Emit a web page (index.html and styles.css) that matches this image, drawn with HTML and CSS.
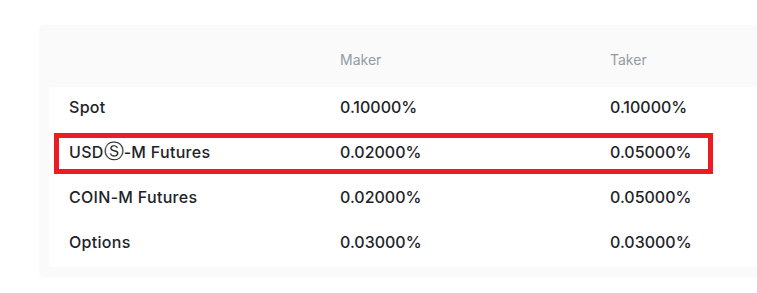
FILE: index.html
```html
<!DOCTYPE html>
<html lang="en">
<head>
<meta charset="utf-8">
<title>Trading fees</title>
<link rel="stylesheet" href="styles.css">
</head>
<body>
<div class="panel">
  <div class="row head">
    <div class="cell"></div>
    <div class="cell">Maker</div>
    <div class="cell">Taker</div>
  </div>
  <div class="body">
    <div class="row">
      <div class="cell">Spot</div>
      <div class="cell">0.10000%</div>
      <div class="cell">0.10000%</div>
    </div>
    <div class="row">
      <div class="cell">USD<span class="circ">Ⓢ</span>-M Futures</div>
      <div class="cell">0.02000%</div>
      <div class="cell">0.05000%</div>
    </div>
    <div class="row">
      <div class="cell">COIN-M Futures</div>
      <div class="cell">0.02000%</div>
      <div class="cell">0.05000%</div>
    </div>
    <div class="row">
      <div class="cell">Options</div>
      <div class="cell">0.03000%</div>
      <div class="cell">0.03000%</div>
    </div>
    <div class="highlight"></div>
  </div>
</div>
</body>
</html>
```
FILE: styles.css
```css
html, body {
  margin: 0;
  padding: 0;
  overflow: hidden;
  background: #ffffff;
}
body {
  font-family: Inter, "Noto Sans", "DejaVu Sans", sans-serif;
  color: #1e2329;
}
.panel {
  margin: 25px 0 0 39px;
  width: 760px;
  background: #fafafa;
  border-radius: 5px;
  padding: 0 0 10px 10px;
}
.row {
  display: grid;
  grid-template-columns: 271px 270px 1fr;
  padding-left: 20px;
}
.head {
  padding-top: 24px;
  padding-bottom: 17px;
  line-height: 21px;
  font-size: 14px;
  color: #929aa5;
}
.body {
  position: relative;
  background: #ffffff;
}
.body .row {
  height: 45px;
  line-height: 41px;
  font-size: 16px;
  font-weight: 500;
}
.body .cell:first-child {
  letter-spacing: 0.3px;
}
.circ {
  font-family: "DejaVu Sans", sans-serif;
  font-weight: 400;
  font-size: 20px;
  line-height: 0;
  letter-spacing: 0;
}
.highlight {
  position: absolute;
  left: 5px;
  top: 46px;
  width: 649px;
  height: 31px;
  border: 5px solid #ed1c24;
}
```
